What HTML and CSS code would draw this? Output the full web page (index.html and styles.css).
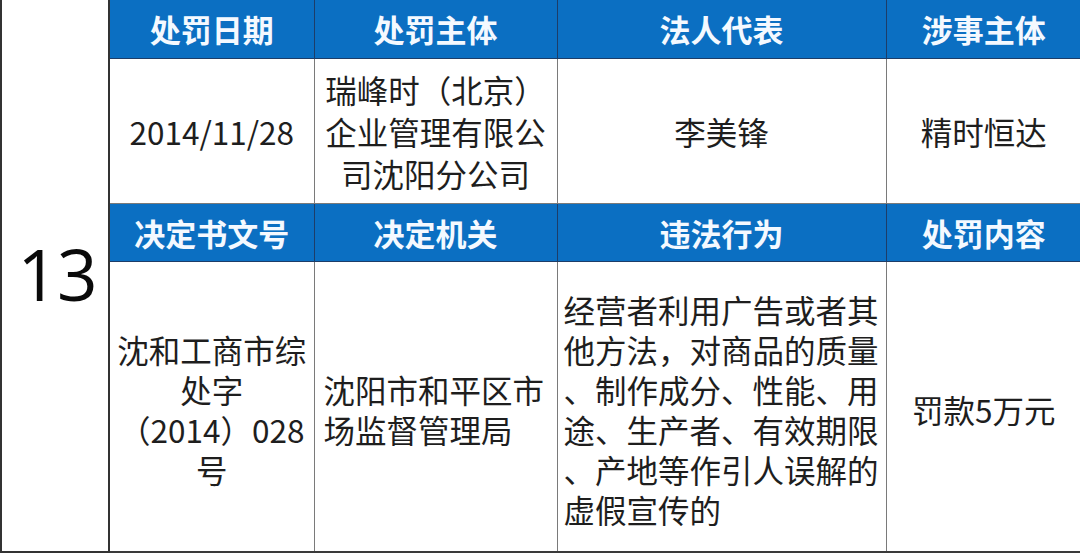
FILE: index.html
```html
<!DOCTYPE html>
<html lang="zh">
<head>
<meta charset="utf-8">
<link rel="stylesheet" href="styles.css">
</head>
<body>
<table class="penalty">
  <colgroup>
    <col class="c-num">
    <col class="c-1">
    <col class="c-2">
    <col class="c-3">
    <col class="c-4">
  </colgroup>
  <tr class="head head-top">
    <td class="num" rowspan="4">13</td>
    <th>处罚日期</th>
    <th>处罚主体</th>
    <th>法人代表</th>
    <th>涉事主体</th>
  </tr>
  <tr class="data data-top">
    <td class="center">2014/11/28</td>
    <td class="center">瑞峰时（北京）<br>企业管理有限公<br>司沈阳分公司</td>
    <td class="center">李美锋</td>
    <td class="center">精时恒达</td>
  </tr>
  <tr class="head head-mid">
    <th>决定书文号</th>
    <th>决定机关</th>
    <th>违法行为</th>
    <th>处罚内容</th>
  </tr>
  <tr class="data data-bottom">
    <td class="center">沈和工商市综<br>处字<br>（2014）028<br>号</td>
    <td class="left">沈阳市和平区市<br>场监督管理局</td>
    <td class="left narrow">经营者利用广告或者其<br>他方法，对商品的质量<br>、制作成分、性能、用<br>途、生产者、有效期限<br>、产地等作引人误解的<br>虚假宣传的</td>
    <td class="center">罚款5万元</td>
  </tr>
</table>
</body>
</html>
```
FILE: styles.css
```css
html, body {
  margin: 0;
  padding: 0;
  background: #ffffff;
}

body {
  width: 1080px;
  height: 553px;
  overflow: hidden;
  font-family: "Noto Sans CJK SC", "Noto Sans", sans-serif;
}

.penalty {
  width: 1080px;
  table-layout: fixed;
  border-collapse: collapse;
  border-left: 2px solid #333333;
  border-bottom: 2px solid #3a3a3a;
}

.c-num { width: 108px; }
.c-1 { width: 205px; }
.c-2 { width: 243px; }
.c-3 { width: 329px; }
.c-4 { width: 195px; }

.num {
  border: 2px solid #333333;
  border-top: none;
  text-align: center;
  vertical-align: middle;
  font-family: "Open Sans", "Noto Sans", sans-serif;
  font-size: 71px;
  font-weight: 400;
  color: #0a0a0a;
  padding: 0 0 4px 4px;
  letter-spacing: -1px;
}

.head th {
  background: #0b6fc2;
  color: #f4f9ff;
  font-weight: 700;
  font-size: 31px;
  line-height: 40px;
  padding: 0;
  border: 1px solid #1d3d68;
  text-align: center;
  vertical-align: middle;
  white-space: nowrap;
}

.head-top th {
  height: 58px;
  border-top: none;
}

.head-mid th {
  height: 57px;
}

.data td {
  border: 1px solid #7a7a7a;
  font-size: 31.5px;
  line-height: 40px;
  color: #1e1e1e;
  vertical-align: middle;
  padding: 0 4px;
  white-space: nowrap;
}

.data-top td {
  height: 144px;
  line-height: 42px;
}

.data-bottom td {
  height: 285px;
  padding-top: 4px;
}

.data td.center {
  text-align: center;
}

.data td.left {
  text-align: left;
  padding-left: 9px;
}

.data td.narrow {
  padding-left: 6px;
  padding-right: 0;
}

.data td:last-child,
.head th:last-child {
  border-right: none;
}
```
